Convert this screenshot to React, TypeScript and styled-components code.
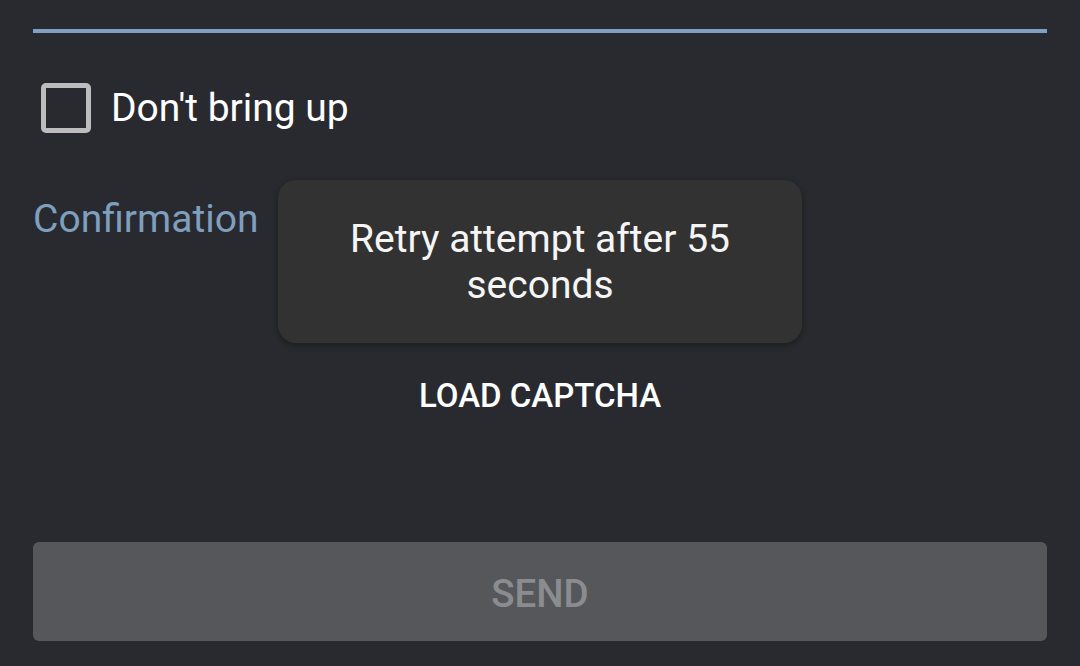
import React from "react";
import styled, { createGlobalStyle } from "styled-components";

const Global = createGlobalStyle`
  html, body { margin: 0; padding: 0; background: #292a2f; }
  * { box-sizing: border-box; }
`;

const Page = styled.div`
  position: relative;
  width: 1080px;
  height: 666px;
  overflow: hidden;
  background: #292a2f;
  padding: 0 33px;
  display: flex;
  flex-direction: column;
  font-family: Roboto, "Noto Sans", sans-serif;
`;

const Underline = styled.div`
  margin-top: 29px;
  height: 4px;
  background: #7fa0c2;
`;

const CheckRow = styled.label`
  margin-top: 50px;
  height: 50px;
  padding-left: 8px;
  display: flex;
  align-items: center;
  gap: 20px;
`;

const Box = styled.span`
  width: 50px;
  height: 50px;
  border: 5px solid #bdbdbd;
  border-radius: 5px;
  flex: none;
`;

const CheckText = styled.span`
  font-size: 39px;
  line-height: 45px;
  color: #ffffff;
`;

const FieldLabel = styled.div`
  margin-top: 64px;
  font-size: 39px;
  line-height: 45px;
  color: #7f9fbf;
`;

const CaptchaButton = styled.div`
  margin-top: 134px;
  align-self: center;
  font-size: 33px;
  line-height: 40px;
  font-weight: 500;
  color: #ffffff;
`;

const SendButton = styled.div`
  margin-top: 126px;
  height: 99px;
  border-radius: 6px;
  background: #56575b;
  display: flex;
  align-items: center;
  justify-content: center;
  padding-top: 3px;
  font-size: 38.5px;
  font-weight: 500;
  color: #8b8c8f;
`;

const Toast = styled.div`
  position: absolute;
  top: 180px;
  left: 50%;
  transform: translateX(-50%);
  width: 524px;
  height: 163px;
  padding-top: 36px;
  border-radius: 18px;
  background: #323232;
  box-shadow: 0 2px 6px rgba(0, 0, 0, 0.35);
  text-align: center;
  font-size: 39px;
  line-height: 46px;
  color: #f5f5f5;
`;

export default function App() {
  return (
    <>
      <Global />
      <Page>
        <Underline />
        <CheckRow>
          <Box />
          <CheckText>Don't bring up</CheckText>
        </CheckRow>
        <FieldLabel>Confirmation</FieldLabel>
        <CaptchaButton>LOAD CAPTCHA</CaptchaButton>
        <SendButton>SEND</SendButton>
        <Toast>
          Retry attempt after 55
          <br />
          seconds
        </Toast>
      </Page>
    </>
  );
}
